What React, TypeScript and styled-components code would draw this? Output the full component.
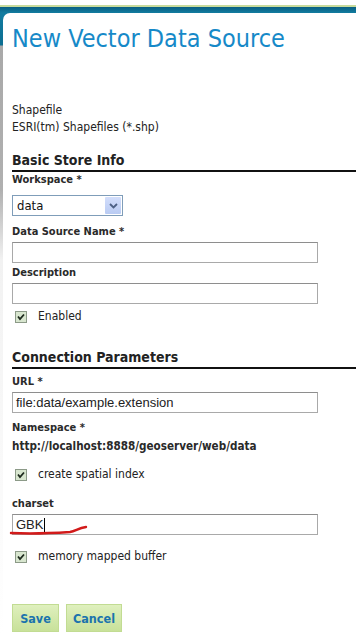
import React from "react";
import styled, { createGlobalStyle } from "styled-components";

const Global = createGlobalStyle`
  html, body { margin: 0; padding: 0; background: #fff; }
  body { font-family: Tahoma, "DejaVu Sans", sans-serif; font-stretch: condensed; }
`;

const Frame = styled.div`
  width: 356px;
  height: 634px;
  overflow: hidden;
  background: linear-gradient(
    to bottom,
    #ffffff 0px,
    #ffffff 5px,
    #c8db9c 5px,
    #c8db9c 7px,
    #0a5f82 7px,
    #127ca0 13px,
    #0d6e92 45px,
    #a9a9a9 46px,
    #b0b0b0 190px,
    #f2f2f2 260px,
    #ffffff 634px
  );
  padding: 13px 0 0 3px;
  box-sizing: border-box;
`;

const Panel = styled.div`
  background: #fff;
  border-top-left-radius: 7px;
  height: 100%;
  padding: 0 0 0 9px;
  box-sizing: border-box;
`;

const Title = styled.h1`
  margin: 0;
  padding-top: 11px;
  font-family: Tahoma, "DejaVu Sans", sans-serif;
  font-stretch: condensed;
  font-weight: normal;
  font-size: 25px;
  line-height: 30px;
  color: #1689c8;
`;

const Info = styled.div`
  margin-top: 48px;
  font-size: 12px;
  line-height: 17px;
  color: #222;
`;

const SectionTitle = styled.h2<{ $top: number }>`
  margin: ${(p) => p.$top}px 0 0 0;
  font-size: 14px;
  line-height: 17px;
  font-weight: bold;
  color: #222;
  border-bottom: 2px solid #111;
  padding-bottom: 1px;
`;

const Label = styled.div<{ $top: number }>`
  margin-top: ${(p) => p.$top}px;
  font-size: 11px;
  line-height: 14px;
  font-weight: bold;
  color: #2a2a2a;
`;

const SelectBox = styled.div`
  margin-top: 8px;
  width: 111px;
  height: 21px;
  box-sizing: border-box;
  border: 1px solid #7f9db9;
  display: flex;
  align-items: stretch;
  background: #fff;
`;

const SelectText = styled.div`
  flex: 1;
  font-family: Tahoma, "DejaVu Sans", sans-serif;
  font-size: 13px;
  line-height: 19px;
  padding-left: 4px;
  color: #111;
`;

const SelectArrow = styled.div`
  width: 16px;
  margin: 1px;
  background: linear-gradient(#d3defb, #b9cbf3);
  border-radius: 1px;
  display: flex;
  align-items: center;
  justify-content: center;
`;

const Field = styled.div<{ $top: number }>`
  position: relative;
  margin-top: ${(p) => p.$top}px;
  width: 306px;
  height: 21px;
  box-sizing: border-box;
  border: 1px solid #a9a9a9;
  border-top-color: #8e8e8e;
  background: #fff;
  display: flex;
  align-items: center;
  padding-left: 3px;
  font-family: "Liberation Sans", Arial, sans-serif;
  font-size: 13px;
  color: #222;
`;

const Caret = styled.span`
  display: inline-block;
  width: 1px;
  height: 14px;
  background: #000;
  margin-left: 1px;
`;

const Annotation = styled.svg`
  position: absolute;
  left: -3px;
  top: 8px;
  overflow: visible;
`;

const CheckRow = styled.div<{ $top: number }>`
  margin-top: ${(p) => p.$top}px;
  display: flex;
  align-items: center;
  gap: 11px;
  padding-left: 3px;
  font-size: 12px;
  line-height: 15px;
  color: #222;
`;

const Value = styled.div`
  margin-top: 4px;
  font-size: 11.6px;
  line-height: 14px;
  font-weight: bold;
  color: #2a2a2a;
`;

const Buttons = styled.div`
  margin-top: 40px;
  display: flex;
  gap: 7px;
`;

const Button = styled.div<{ $w: number }>`
  width: ${(p) => p.$w}px;
  height: 28px;
  box-sizing: border-box;
  border: 1px solid #c2dc93;
  background: linear-gradient(#dff0be, #c8e19a);
  display: flex;
  align-items: center;
  justify-content: center;
  font-size: 12.5px;
  font-weight: bold;
  color: #1b73ad;
`;

const Check = () => (
  <svg width="12" height="12" viewBox="0 0 12 12">
    <rect x="0.5" y="0.5" width="11" height="11" fill="#d8e6cf" stroke="#8c9a88" />
    <path d="M3 5.5 L5 8 L9 3.5" fill="none" stroke="#1d2a1d" strokeWidth="1.8" />
  </svg>
);

const Chevron = () => (
  <svg width="9" height="6" viewBox="0 0 9 6">
    <path d="M1 1 L4.5 4.5 L8 1" fill="none" stroke="#4d6185" strokeWidth="1.8" />
  </svg>
);

export default function App() {
  return (
    <Frame>
      <Global />
      <Panel>
        <Title>New Vector Data Source</Title>
        <Info>
          Shapefile
          <br />
          ESRI(tm) Shapefiles (*.shp)
        </Info>

        <SectionTitle $top={16}>Basic Store Info</SectionTitle>
        <Label $top={1}>Workspace *</Label>
        <SelectBox>
          <SelectText>data</SelectText>
          <SelectArrow>
            <Chevron />
          </SelectArrow>
        </SelectBox>
        <Label $top={9}>Data Source Name *</Label>
        <Field $top={3} />
        <Label $top={3}>Description</Label>
        <Field $top={3} />
        <CheckRow $top={5}>
          <Check />
          Enabled
        </CheckRow>

        <SectionTitle $top={25}>Connection Parameters</SectionTitle>
        <Label $top={6}>URL *</Label>
        <Field $top={3}>file:data/example.extension</Field>
        <Label $top={8}>Namespace *</Label>
        <Value>http://localhost:8888/geoserver/web/data</Value>
        <CheckRow $top={14}>
          <Check />
          create spatial index
        </CheckRow>
        <Label $top={15}>charset</Label>
        <Field $top={3}>
          GBK
          <Caret />
          <Annotation width="80" height="12">
            <path
              d="M1 10 C 20 11, 45 10, 60 9 C 66 8, 68 5, 76 4"
              fill="none"
              stroke="#d21a1a"
              strokeWidth="2.4"
              strokeLinecap="round"
            />
          </Annotation>
        </Field>
        <CheckRow $top={14}>
          <Check />
          memory mapped buffer
        </CheckRow>

        <Buttons>
          <Button $w={47}>Save</Button>
          <Button $w={56}>Cancel</Button>
        </Buttons>
      </Panel>
    </Frame>
  );
}
